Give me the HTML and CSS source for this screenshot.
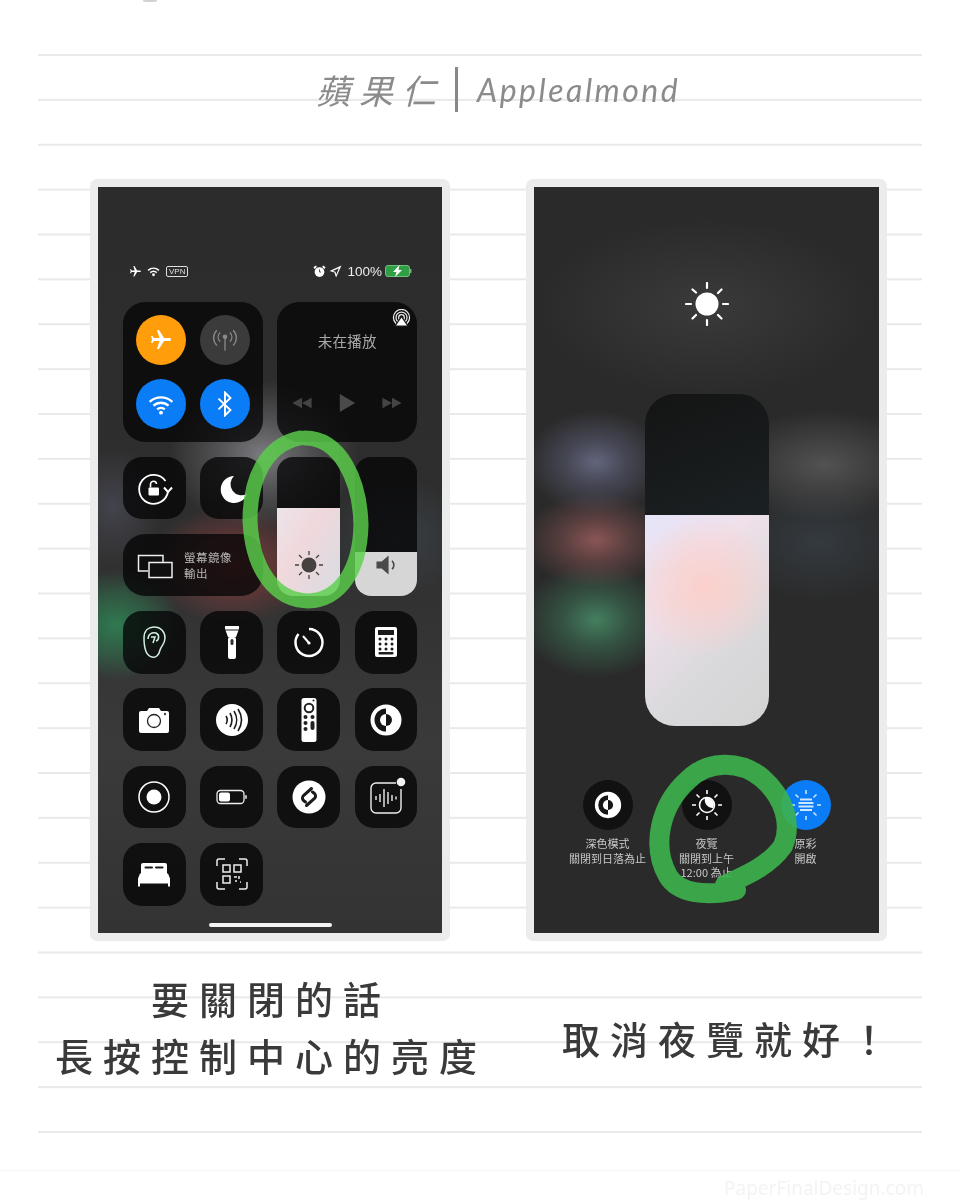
FILE: index.html
```html
<!DOCTYPE html>
<html lang="zh-Hant">
<head>
<meta charset="utf-8">
<title>蘋果仁 | Applealmond</title>
<link rel="stylesheet" href="styles.css">
</head>
<body>
<div class="page">
  <div class="top-mark"></div>
  <main class="sheet">
    <header class="title">
      <span class="title-cjk">蘋果仁</span>
      <span class="title-bar"></span>
      <span class="title-latin">Applealmond</span>
    </header>

    <section class="phones">
      <div class="frame">
        <div class="screen screen-a">
          <div class="status">
            <div class="status-group">
              <svg class="st-ic" viewBox="0 0 24 24"><path fill="#fff" transform="rotate(90 12 12)" d="M21 16v-2l-8-5V3.5c0-.83-.67-1.5-1.5-1.5S10 2.67 10 3.5V9l-8 5v2l8-2.5V19l-2 1.5V22l3.5-1 3.5 1v-1.5L13 19v-5.5l8 2.5z"/></svg>
              <svg class="st-ic" viewBox="0 0 24 24"><path fill="none" stroke="#fff" stroke-width="2.800" d="M2 10c6-5.500 14-5.500 20 0M6 14c3.500-3 8.500-3 12 0"/><circle cx="12" cy="18" r="2.600" fill="#fff"/></svg>
              <span class="vpn">VPN</span>
            </div>
            <div class="status-group right">
              <svg class="st-ic" viewBox="0 0 24 24"><circle cx="12" cy="13" r="9" fill="#fff"/><path d="M12 8v5h3" fill="none" stroke="#333" stroke-width="1.500"/><path d="M2 6l4-4M22 6l-4-4" stroke="#fff" stroke-width="3.500"/></svg>
              <svg class="st-ic" viewBox="0 0 24 24"><path d="M23 1L1 11l9 3 3 9z M18 6L7 11l5 1.500 1.500 5z" fill="#fff" fill-rule="evenodd"/></svg>
              <span class="pct">100%</span>
              <svg class="batt" viewBox="0 0 27 12"><rect x=".5" y=".5" width="24" height="11" rx="2.500" fill="#2f9e45" stroke="#6fc07f"/><rect x="25" y="4" width="1.500" height="4" fill="#6fae78"/><path d="M14.500 0L8 7h3.500L10 12l7-7h-3.500z" fill="#fff"/></svg>
            </div>
          </div>

          <div class="cc-grid">
            <div class="block conn">
              <span class="round orange"><svg class="ic-24" viewBox="0 0 24 24"><path fill="#fff" transform="rotate(90 12 12)" d="M21 16v-2l-8-5V3.5c0-.83-.67-1.5-1.5-1.5S10 2.67 10 3.5V9l-8 5v2l8-2.5V19l-2 1.5V22l3.500-1 3.500 1v-1.500L13 19v-5.500l8 2.500z"/></svg></span>
              <span class="round grey"><svg class="ic-26" viewBox="0 0 24 24" fill="none" stroke="#8a8a8a" stroke-width="1.200"><circle cx="12" cy="9" r="1.500" fill="#8a8a8a"/><path d="M12 10v12M7.500 5c-2.500 2.500-2.500 6 0 8.500M16.500 5c2.500 2.500 2.500 6 0 8.500M4.500 3c-4 4-4 10 0 14M19.500 3c4 4 4 10 0 14"/></svg></span>
              <span class="round blue"><svg class="ic-26" viewBox="0 0 24 24"><path fill="none" stroke="#fff" stroke-width="2.200" d="M1.500 10c6-5.500 15-5.500 21 0M5 13.500c4-3.500 10-3.500 14 0M8.500 17c2-1.800 5-1.800 7 0"/><circle cx="12" cy="20" r="1.800" fill="#fff"/></svg></span>
              <span class="round blue"><svg class="ic-26" viewBox="0 0 24 24"><path fill="none" stroke="#fff" stroke-width="1.800" d="M6 7l11 10.500-5 5V1.500l5 5L6 17"/></svg></span>
            </div>

            <div class="block media">
              <svg class="airplay" viewBox="0 0 20 20"><g fill="none" stroke="#eee" stroke-width="1.300"><circle cx="10" cy="9" r="3"/><circle cx="10" cy="9" r="5.800"/><circle cx="10" cy="9" r="8.500"/></g><path d="M10 8l7 10H3z" fill="#fff" stroke="#1a1a1c" stroke-width="1.200"/></svg>
              <p class="media-text">未在播放</p>
              <div class="media-ctrl">
                <svg class="ctrl-s" viewBox="0 0 24 16"><path d="M12 2L1 8l11 6zM23 2L12 8l11 6z" fill="#444"/></svg>
                <svg class="ctrl-l" viewBox="0 0 20 22"><path d="M2 1l17 10L2 21z" fill="#4a4a4a"/></svg>
                <svg class="ctrl-s" viewBox="0 0 24 16"><path d="M1 2l11 6-11 6zM12 2l11 6-11 6z" fill="#444"/></svg>
              </div>
            </div>

            <div class="tile"><svg class="ic" viewBox="0 0 40 40" fill="none" stroke="#fff" stroke-width="1.800"><path d="M34 23.500a14.500 14.500 0 1 1-2.500-10.500"/><path d="M30 19.500l4 4.500 4-4.500" stroke-width="2"/><rect x="14.500" y="19.500" width="10.500" height="8" rx="1" fill="#fff" stroke="none"/><path d="M16.500 19.500v-3a3 3 0 0 1 6-.5" stroke-width="1.600"/></svg></div>
            <div class="tile"><svg class="ic" viewBox="0 0 40 40"><path d="M22 8A13.500 13.500 0 1 0 35 26A11.200 11.200 0 0 1 22 8z" fill="#fff"/></svg></div>

            <div class="slider">
              <div class="fill fill-bright"><svg class="ic-30" viewBox="0 0 30 30"><circle cx="15" cy="15" r="7.500" fill="#45413f"/><path d="M15 1v4M15 25v4M1 15h4M25 15h4M5 5l3 3M22 22l3 3M25 5l-3 3M8 22l-3 3" stroke="#45413f" stroke-width="1.300"/></svg></div>
            </div>
            <div class="slider vol">
              <div class="fill fill-vol"><svg class="ic-26" viewBox="0 0 30 30"><path d="M4 11h6l8-7v22l-8-7H4z" fill="#4a4a4a"/><path d="M22 10c2.500 3 2.500 7 0 10" fill="none" stroke="#4a4a4a" stroke-width="1.800"/></svg></div>
            </div>

            <div class="block mirror">
              <svg class="mirror-ic" viewBox="0 0 36 26" fill="none" stroke="#eee" stroke-width="1.500"><path d="M11 18H1.500V2.500H26V9"/><rect x="12" y="9.500" width="23" height="15"/></svg>
              <p class="mirror-text">螢幕鏡像<br>輸出</p>
            </div>

            <div class="tile"><svg class="ic" viewBox="0 0 40 40" fill="none" stroke="#d4efe0" stroke-width="1.500"><path d="M10 16C10 8 15 5 20 5c7 0 11 5 11 11 0 6-4 8-5 12-1 5-4 8-8 7-5-1-8-6-8-19z"/><path d="M14 17c0-5 4-7 8-6 4 2 3 7 0 8M17 15h4l-2 6"/></svg></div>
            <div class="tile"><svg class="ic" viewBox="0 0 40 40"><path d="M13 4h14v3l-3 8h-8l-3-8z" fill="#fff"/><rect x="16" y="15" width="8" height="22" rx="2" fill="#fff"/><rect x="18.500" y="17" width="3" height="6" rx="1.500" fill="#333"/><path d="M13 8h14" stroke="#222" stroke-width="1"/></svg></div>
            <div class="tile"><svg class="ic" viewBox="0 0 40 40" fill="none" stroke="#fff" stroke-width="2.500"><path d="M20 7a13.500 13.500 0 1 1-10.500 5"/><path d="M14 14l6 7" stroke-width="2"/><circle cx="20" cy="21" r="1.600" fill="#fff" stroke="none"/></svg></div>
            <div class="tile"><svg class="ic" viewBox="0 0 40 40"><rect x="9" y="5" width="22" height="30" rx="2" fill="#fff"/><rect x="12" y="8" width="16" height="5" fill="#1b1b1b"/><g fill="#1b1b1b"><circle cx="14" cy="17" r="1.500"/><circle cx="20" cy="17" r="1.500"/><circle cx="26" cy="17" r="1.500"/><circle cx="14" cy="22" r="1.500"/><circle cx="20" cy="22" r="1.500"/><circle cx="26" cy="22" r="1.500"/><circle cx="14" cy="27" r="1.500"/><circle cx="20" cy="27" r="1.500"/><circle cx="26" cy="27" r="1.500"/><rect x="12.500" y="30" width="15" height="2.500" rx="1"/></g></svg></div>

            <div class="tile"><svg class="ic" viewBox="0 0 40 40"><path d="M5 13a2 2 0 0 1 2-2h6l2-3h10l2 3h6a2 2 0 0 1 2 2v18a2 2 0 0 1-2 2H7a2 2 0 0 1-2-2z" fill="#fff"/><circle cx="20" cy="21" r="6.500" fill="#fff" stroke="#222" stroke-width="1.300"/><circle cx="31" cy="14" r="1.200" fill="#444"/></svg></div>
            <div class="tile"><svg class="ic" viewBox="0 0 40 40"><circle cx="20" cy="20" r="16" fill="#fff"/><path d="M14 16c1.500 2.500 1.500 5.500 0 8M18 13c2.500 4.500 2.500 9.500 0 14M22 11c3.500 5.500 3.500 12.500 0 18M26 9c4.500 7 4.500 15 0 22" fill="none" stroke="#1b1b1b" stroke-width="1.600"/></svg></div>
            <div class="tile"><svg class="ic-remote" viewBox="0 0 20 46"><rect x="2.500" y="1" width="15" height="44" rx="2.500" fill="#fff"/><circle cx="10" cy="11" r="4.300" fill="#fff" stroke="#222" stroke-width="2"/><circle cx="14.500" cy="3.500" r="1" fill="#222"/><g fill="#222"><circle cx="6.500" cy="20" r="2"/><circle cx="13.500" cy="20" r="2"/><circle cx="6.500" cy="26" r="2"/><rect x="11.500" y="24" width="4" height="9" rx="2"/><circle cx="6.500" cy="32" r="2"/></g></svg></div>
            <div class="tile"><svg class="ic" viewBox="0 0 40 40"><circle cx="20" cy="20" r="15.500" fill="#fff"/><path d="M20 8.500a11.500 11.500 0 0 0 0 23z" fill="#161616"/><path d="M20 14a6 6 0 0 0 0 12z" fill="#fff"/><path d="M20 14a6 6 0 0 1 0 12z" fill="#161616"/></svg></div>

            <div class="tile"><svg class="ic" viewBox="0 0 40 40"><circle cx="20" cy="20" r="15" fill="none" stroke="#fff" stroke-width="1.500"/><circle cx="20" cy="20" r="7.500" fill="#fff"/></svg></div>
            <div class="tile"><svg class="ic" viewBox="0 0 40 40"><rect x="5" y="13.500" width="27" height="13" rx="3.500" fill="none" stroke="#eee" stroke-width="1.300"/><rect x="7" y="15.500" width="11" height="9" rx="2" fill="#fff"/><rect x="33" y="18" width="2" height="4" rx="1" fill="#bbb"/></svg></div>
            <div class="tile"><svg class="ic" viewBox="0 0 40 40"><circle cx="20" cy="20" r="16.500" fill="#fff"/><path d="M22.500 11.500l-8 7a3.500 3.500 0 0 0 0 5l2 1.500M17.500 28.500l8-7a3.500 3.500 0 0 0 0-5l-2-1.500" fill="none" stroke="#1b1b1b" stroke-width="3" stroke-linecap="round"/></svg></div>
            <div class="tile"><svg class="ic" viewBox="0 0 40 40" fill="none" stroke="#eee" stroke-width="1.400"><path d="M30 6H10a5 5 0 0 0-5 5v20a5 5 0 0 0 5 5h20a5 5 0 0 0 5-5V12"/><path d="M10 19v4M14 17v8M18 12v18M22 15v12M26 18v6M30 19.500v3"/><circle cx="35" cy="5" r="4.300" fill="#f2f2f2" stroke="none"/></svg></div>

            <div class="tile"><svg class="ic" viewBox="0 0 40 40"><path d="M7 11a2 2 0 0 1 2-2h22a2 2 0 0 1 2 2v9H7z" fill="#fff"/><rect x="10.500" y="12.500" width="8.500" height="2" rx="1" fill="#1b1b1b"/><rect x="21" y="12.500" width="8.500" height="2" rx="1" fill="#1b1b1b"/><path d="M6 19.500h28l2 5v8h-2v-3H6v3H4v-8z" fill="#fff"/></svg></div>
            <div class="tile"><svg class="ic" viewBox="0 0 40 40" fill="none" stroke="#eee" stroke-width="1.500"><path d="M5 12V7a2 2 0 0 1 2-2h6M27 5h6a2 2 0 0 1 2 2v5M35 28v5a2 2 0 0 1-2 2h-6M13 35H7a2 2 0 0 1-2-2v-5"/><rect x="11" y="11" width="7" height="7"/><rect x="22" y="11" width="7" height="7"/><rect x="11" y="22" width="7" height="7"/><path d="M22 23h3M27 22v3M23 27h2M28 28h1" /></svg></div>
          </div>

          <div class="home-bar"></div>
        </div>
        <svg class="marks" viewBox="90 179 360 762"><path class="mark mark-a" d="M305 438C340 438 360 480 361 525 C360 570 340 600 308 601 C275 600 252 570 250 520 C250 480 265 445 300 438"/></svg>
      </div>

      <div class="frame">
        <div class="screen screen-b">
          <svg class="big-sun" viewBox="0 0 44 44"><circle cx="22" cy="22" r="11.500" fill="#fff"/><path d="M22 1v5M22 38v5M1 22h5M38 22h5M7.500 7.500l3.500 3M33 33l3.500 3.500M36.500 7.500L33 11M11 33l-3.500 3.500" stroke="#fff" stroke-width="2.200" stroke-linecap="round"/></svg>
          <div class="big-slider"><div class="big-fill"></div></div>
          <div class="opts">
            <div class="opt">
              <span class="opt-btn dark"><svg class="ic-34" viewBox="0 0 40 40"><circle cx="20" cy="20" r="15.500" fill="#fff"/><path d="M20 8.500a11.500 11.500 0 0 0 0 23z" fill="#161616"/><path d="M20 14a6 6 0 0 0 0 12z" fill="#fff"/><path d="M20 14a6 6 0 0 1 0 12z" fill="#161616"/></svg></span>
              <p class="opt-text">深色模式<br>關閉到日落為止</p>
            </div>
            <div class="opt">
              <span class="opt-btn dark"><svg class="ic-34" viewBox="0 0 34 34"><circle cx="17" cy="17" r="7.500" fill="none" stroke="#fff" stroke-width="1.600"/><path d="M15 10a7 7 0 0 1 8 10 8 8 0 0 1-8-10z" fill="#fff"/><path d="M17 2v4M17 28v4M2 17h4M28 17h4M6.500 6.500l3 3M24.500 24.500l3 3M27.500 6.500l-3 3M9.500 24.500l-3 3" stroke="#fff" stroke-width="1.600"/></svg></span>
              <p class="opt-text">夜覽<br>關閉到上午<br>12:00 為止</p>
            </div>
            <div class="opt">
              <span class="opt-btn bluebtn"><svg class="ic-34" viewBox="0 0 34 34"><g stroke="#cfe6ff" stroke-width="1.500"><path d="M17 2v4M17 28v4M2 17h4M28 17h4M6.500 6.500l3 3M24.500 24.500l3 3M27.500 6.500l-3 3M9.500 24.500l-3 3"/><path d="M11 11.500h12M9.500 15h15M9.500 18.500h15M11 22h12" stroke-width="1.800"/></g></svg></span>
              <p class="opt-text">原彩<br>開啟</p>
            </div>
          </div>
        </div>
        <svg class="marks" viewBox="526 179 361 762"><path class="mark mark-b" d="M736 890C705 897 678 893 668 876C651 846 660 805 688 780C708 760 740 760 762 778C785 798 792 825 783 846C770 864 752 873 725 885"/></svg>
      </div>
    </section>

    <section class="captions">
      <p class="cap cap-left">要關閉的話<br>長按控制中心的亮度</p>
      <p class="cap cap-right">取消夜覽就好！</p>
    </section>
  </main>
  <footer class="foot"><span class="watermark">PaperFinalDesign.com</span></footer>
</div>
</body>
</html>
```

FILE: styles.css
```css
* { box-sizing: border-box; }
html, body { margin: 0; padding: 0; background: #fff; }
p { margin: 0; }
.page {
  width: 960px;
  height: 1200px;
  overflow: hidden;
  background: #fff;
  font-family: "Noto Sans CJK TC", "Noto Sans", sans-serif;
}
.top-mark {
  width: 14px;
  height: 2px;
  margin-left: 143px;
  background: #d2d2d2;
  border-radius: 0 0 50% 50%;
  filter: blur(.5px);
}
.sheet {
  width: 884px;
  height: 1080px;
  margin: 52px 0 0 38px;
  background-image: linear-gradient(#e9e9e9 1.500px, transparent 1.500px);
  background-size: 100% 44.880px;
}
.title {
  height: 125px;
  display: flex;
  align-items: center;
  padding: 0 0 55px 278px;
  color: #8b8b8b;
}
.title-cjk {
  width: 125px;
  font-size: 34px;
  letter-spacing: 9px;
  font-weight: 400;
  font-style: italic;
  white-space: nowrap;
  filter: blur(.4px);
}
.title-bar {
  width: 3px;
  height: 45px;
  background: #888;
  margin: 0 19px 0 14px;
}
.title-latin {
  font-family: "Lato", sans-serif;
  font-style: italic;
  font-size: 32px;
  letter-spacing: 2.500px;
  font-weight: 400;
  filter: blur(.4px);
}
.phones {
  display: flex;
  gap: 76px;
  padding-left: 52px;
}
.frame {
  position: relative;
  width: 360px;
  height: 762px;
  border: 8px solid #ececec;
  border-radius: 7px;
  background: #2b2b2b;
}
.frame + .frame { width: 361px; }
.screen {
  height: 100%;
  overflow: hidden;
  color: #fff;
  filter: blur(.45px);
}
.screen-a {
  padding: 72px 25px 0;
  background:
    radial-gradient(ellipse 65px 55px at 18px 438px, #2f7a50 0%, rgba(47,122,80,.5) 55%, rgba(47,122,80,0) 100%),
    radial-gradient(ellipse 85px 60px at 135px 378px, #7d3b3b 0%, rgba(125,59,59,.55) 50%, rgba(125,59,59,0) 100%),
    radial-gradient(ellipse 95px 75px at 165px 268px, #7b7b80 0%, rgba(120,120,125,.45) 50%, rgba(120,120,125,0) 100%),
    radial-gradient(ellipse 50px 60px at 15px 320px, #43444c 0%, rgba(67,68,76,0) 100%),
    radial-gradient(ellipse 70px 60px at 300px 350px, #3a4046 0%, rgba(58,64,70,0) 100%),
    linear-gradient(#2c2c2c 0%, #2e2e2e 45%, #3a3a3a 75%, #333 100%);
}
.screen-b {
  display: flex;
  flex-direction: column;
  align-items: center;
  padding-top: 95px;
  background:
    radial-gradient(ellipse 70px 52px at 62px 275px, #62657c 0%, rgba(90,92,115,.55) 45%, rgba(90,92,115,0) 100%),
    radial-gradient(ellipse 72px 48px at 62px 353px, #8a5555 0%, rgba(130,80,80,.55) 45%, rgba(130,80,80,0) 100%),
    radial-gradient(ellipse 75px 58px at 62px 433px, #447f5f 0%, rgba(60,115,85,.55) 45%, rgba(60,115,85,0) 100%),
    radial-gradient(ellipse 100px 55px at 290px 278px, #525252 0%, rgba(82,82,82,0) 100%),
    radial-gradient(ellipse 90px 60px at 285px 355px, #343a40 0%, rgba(52,58,64,0) 100%),
    radial-gradient(ellipse 170px 90px at 172px 120px, #3a3a3a 0%, rgba(58,58,58,0) 100%),
    #2a2a2a;
}
.status {
  height: 24px;
  margin: 0 6px 19px 6px;
  padding: 0;
  display: flex;
  justify-content: space-between;
  align-items: center;
}
.status-group { display: flex; align-items: center; gap: 5px; }
.status-group.right { gap: 3px; margin-right: -1px; }
.st-ic { width: 13px; height: 13px; display: block; }
.vpn {
  font-size: 8px;
  line-height: 9px;
  padding: 0 2px;
  margin-left: 1px;
  border: 1px solid #ddd;
  border-radius: 2px;
  color: #ddd;
  font-family: "Liberation Sans", sans-serif;
}
.pct {
  font-family: "Liberation Sans", sans-serif;
  font-size: 13.500px;
  color: #eee;
  margin: 0 0 0 2px;
}
.batt { width: 27px; height: 12px; display: block; }
.cc-grid {
  display: grid;
  grid-template-columns: repeat(4, 62.700px);
  grid-auto-rows: 62.600px;
  gap: 14.700px 14.500px;
}
.block, .tile, .slider { background: rgba(5,5,6,.78); }
.tile {
  border-radius: 19px;
  display: flex;
  align-items: center;
  justify-content: center;
}
.ic { width: 40px; height: 40px; display: block; }
.ic-remote { width: 20px; height: 46px; display: block; }
.ic-24 { width: 24px; height: 24px; display: block; }
.ic-26 { width: 26px; height: 26px; display: block; }
.ic-30 { width: 30px; height: 30px; display: block; }
.ic-34 { width: 34px; height: 34px; display: block; }
.block { border-radius: 22px; grid-column: span 2; }
.conn {
  grid-row: span 2;
  display: grid;
  grid-template-columns: 50px 50px;
  grid-auto-rows: 50px;
  gap: 14px;
  padding: 13px 13px;
}
.round {
  width: 50px;
  height: 50px;
  border-radius: 50%;
  display: flex;
  align-items: center;
  justify-content: center;
}
.orange { background: #ff9d0a; }
.grey { background: #3b3b3b; }
.blue, .bluebtn { background: #0a7cf5; }
.media {
  grid-row: span 2;
  position: relative;
  display: flex;
  flex-direction: column;
  align-items: center;
  padding: 26px 0 0;
}
.airplay { position: absolute; top: 7px; right: 6px; width: 19px; height: 19px; }
.media-text { font-size: 14.500px; line-height: 26px; color: #a8a8a8; letter-spacing: .3px; }
.media-ctrl {
  margin-top: 39px;
  display: flex;
  gap: 25px;
  align-items: center;
}
.ctrl-s { width: 22px; height: 14px; display: block; }
.ctrl-l { width: 18px; height: 20px; display: block; }
.slider {
  grid-row: span 2;
  border-radius: 16px;
  overflow: hidden;
  display: flex;
  align-items: flex-end;
}
.fill {
  width: 100%;
  display: flex;
  align-items: center;
  justify-content: center;
}
.fill-bright {
  height: 88px;
  padding-top: 26px;
  background: linear-gradient(120deg, #ece4ea 0%, #f0d8dc 40%, #d7dce2 100%);
}
.fill-vol { height: 44px; background: #d6d6d6; padding-bottom: 18px; }
.mirror {
  display: flex;
  align-items: center;
  padding: 0 0 0 14px;
  gap: 11px;
}
.mirror-ic { width: 36px; height: 26px; display: block; margin-top: 2px; }
.mirror-text { font-size: 11.500px; line-height: 16px; color: #b5b5b5; letter-spacing: .5px; }
.home-bar {
  width: 123px;
  height: 4px;
  border-radius: 2px;
  background: #f4f4f4;
  margin: 17px auto 0;
}
.big-sun { width: 44px; height: 44px; display: block; }
.big-slider {
  width: 124px;
  height: 332px;
  margin-top: 68px;
  border-radius: 30px;
  background: linear-gradient(160deg, #141414 0%, #1d2528 60%, #283038 100%);
  overflow: hidden;
  display: flex;
  align-items: flex-end;
}
.big-fill {
  width: 100%;
  height: 211px;
  background:
    radial-gradient(ellipse 75px 70px at 60px 72px, #fbd0cb 0%, rgba(251,208,203,.55) 50%, rgba(251,208,203,0) 100%),
    linear-gradient(135deg, #e5e5fa 0%, #f0e0ea 30%, #d9d9dc 65%, #d4d4d4 100%);
}
.opts {
  display: flex;
  width: 297px;
  margin-top: 54px;
}
.opt {
  width: 99px;
  display: flex;
  flex-direction: column;
  align-items: center;
}
.opt-btn {
  width: 50px;
  height: 50px;
  border-radius: 50%;
  display: flex;
  align-items: center;
  justify-content: center;
}
.opt-btn.dark { background: #111; }
.opt-text {
  margin-top: 6px;
  font-size: 11px;
  line-height: 14.500px;
  color: #c8c8c8;
  text-align: center;
  white-space: nowrap;
}
.marks {
  position: absolute;
  left: -8px;
  top: -8px;
  width: 360px;
  height: 762px;
  pointer-events: none;
  filter: blur(.6px);
}
.frame + .frame .marks { width: 361px; }
.mark { fill: none; stroke-linecap: round; stroke-linejoin: round; }
.mark-a { stroke: #5ad04a; stroke-width: 15px; opacity: .82; }
.mark-b { stroke: #3db34d; stroke-width: 20px; opacity: .9; }
.captions {
  display: flex;
  align-items: flex-start;
  padding: 28px 0 0 17px;
  color: #3a3a3a;
}
.cap {
  font-size: 38px;
  font-weight: 500;
  letter-spacing: 10px;
  line-height: 57px;
  white-space: nowrap;
  filter: blur(.3px);
}
.cap-left { width: 432px; text-align: center; }
.cap-right { margin: 40px 0 0 75px; }
.foot {
  margin-top: 36px;
  height: 32px;
  border-top: 1px solid #f7f7f7;
  display: flex;
  justify-content: flex-end;
  padding: 6px 36px 0 0;
}
.watermark {
  font-family: "Noto Sans", sans-serif;
  font-size: 19px;
  line-height: 22px;
  color: #f3f3f3;
  filter: blur(.6px);
}
```
